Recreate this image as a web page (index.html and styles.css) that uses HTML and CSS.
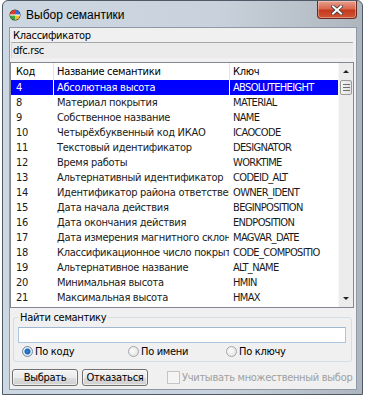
FILE: index.html
```html
<!DOCTYPE html>
<html lang="ru">
<head>
<meta charset="utf-8">
<link rel="stylesheet" href="styles.css">
</head>
<body>
<div class="window">
  <div class="titlebar">
    <svg class="app-icon" width="12" height="12" viewBox="0 0 12 12">
      <circle cx="6" cy="6" r="5.5" fill="#333"/>
      <path d="M6 1 A5 5 0 0 0 1 6 H6 Z" fill="#e23b2a"/>
      <path d="M6 1 A5 5 0 0 1 11 6 H6 Z" fill="#2f6fd6"/>
      <path d="M1 6 A5 5 0 0 0 6 11 V6 Z" fill="#3aa83a"/>
      <path d="M11 6 A5 5 0 0 1 6 11 V6 Z" fill="#f2c12e"/>
      <rect x="1" y="5.3" width="10" height="1.4" fill="#fff" opacity="0.8"/>
    </svg>
    <span class="title">Выбор семантики</span>
    <div class="close">
      <svg width="12" height="10" viewBox="0 0 12 10">
        <path d="M2 1.5 L10 8.5 M10 1.5 L2 8.5" stroke="#3b3b3b" stroke-width="3.6" stroke-linecap="square"/>
        <path d="M2 1.5 L10 8.5 M10 1.5 L2 8.5" stroke="#fff" stroke-width="2" stroke-linecap="square"/>
      </svg>
    </div>
  </div>
  <div class="client">
    <div class="label">Классификатор</div>
    <div class="field">dfc.rsc</div>
    <div class="list">
      <div class="cols">
        <div class="row head"><div class="c1">Код</div><div class="c2">Название семантики</div><div class="c3">Ключ</div></div>
        <div class="row sel"><div class="c1">4</div><div class="c2">Абсолютная высота</div><div class="c3">ABSOLUTEHEIGHT</div></div>
        <div class="row"><div class="c1">8</div><div class="c2">Материал покрытия</div><div class="c3">MATERIAL</div></div>
        <div class="row"><div class="c1">9</div><div class="c2">Собственное название</div><div class="c3">NAME</div></div>
        <div class="row"><div class="c1">10</div><div class="c2">Четырёхбуквенный код ИКАО</div><div class="c3">ICAOCODE</div></div>
        <div class="row"><div class="c1">11</div><div class="c2">Текстовый идентификатор</div><div class="c3">DESIGNATOR</div></div>
        <div class="row"><div class="c1">12</div><div class="c2">Время работы</div><div class="c3">WORKTIME</div></div>
        <div class="row"><div class="c1">13</div><div class="c2">Альтернативный идентификатор</div><div class="c3">CODEID_ALT</div></div>
        <div class="row"><div class="c1">14</div><div class="c2">Идентификатор района ответственности</div><div class="c3">OWNER_IDENT</div></div>
        <div class="row"><div class="c1">15</div><div class="c2">Дата начала действия</div><div class="c3">BEGINPOSITION</div></div>
        <div class="row"><div class="c1">16</div><div class="c2">Дата окончания действия</div><div class="c3">ENDPOSITION</div></div>
        <div class="row"><div class="c1">17</div><div class="c2">Дата измерения магнитного склонения</div><div class="c3">MAGVAR_DATE</div></div>
        <div class="row"><div class="c1">18</div><div class="c2">Классификационное число покрытия</div><div class="c3">CODE_COMPOSITIO</div></div>
        <div class="row"><div class="c1">19</div><div class="c2">Альтернативное название</div><div class="c3">ALT_NAME</div></div>
        <div class="row"><div class="c1">20</div><div class="c2">Минимальная высота</div><div class="c3">HMIN</div></div>
        <div class="row"><div class="c1">21</div><div class="c2">Максимальная высота</div><div class="c3">HMAX</div></div>
      </div>
      <div class="scrollbar">
        <div class="sb-btn"><span class="arrow-up"></span></div>
        <div class="thumb"><i></i><i></i><i></i></div>
        <div class="sb-track"></div>
        <div class="sb-btn"><span class="arrow-down"></span></div>
      </div>
    </div>
    <fieldset class="group">
      <legend>Найти семантику</legend>
      <div class="input"></div>
      <div class="radios">
        <div class="radio-item"><span class="radio on"></span>По коду</div>
        <div class="radio-item"><span class="radio"></span>По имени</div>
        <div class="radio-item"><span class="radio"></span>По ключу</div>
      </div>
    </fieldset>
    <div class="buttons">
      <div class="btn">Выбрать</div>
      <div class="btn">Отказаться</div>
      <div class="check"><span class="box"></span>Учитывать множественный выбор</div>
    </div>
  </div>
</div>
</body>
</html>
```

FILE: styles.css
```css
* { box-sizing: border-box; }
body {
  margin: 0;
  background: #fff;
  font-family: "DejaVu Sans Condensed", "DejaVu Sans", sans-serif;
  font-size: 11px;
  color: #000;
}
.window {
  margin-left: 2px;
  width: 361px;
  height: 395px;
  border: 1px solid #4f5a68;
  border-radius: 6px 6px 0 0;
  background: linear-gradient(to right, #cdd7e2 0%, #c9d2dc 60%, #aeb5bd 100%);
  padding: 0 5px 4px 6px;
  display: flex;
  flex-direction: column;
}
.titlebar {
  height: 26px;
  display: flex;
  align-items: flex-start;
  flex: none;
}
.app-icon { margin-top: 8px; flex: none; }
.title {
  margin-left: 5px;
  margin-top: 7px;
  font-family: "Liberation Sans", Arial, sans-serif;
  font-size: 12px;
  line-height: 15px;
}
.close {
  margin-left: auto;
  width: 40px;
  height: 18px;
  border: 1px solid #6b2a1e;
  border-top: none;
  border-radius: 0 0 4px 4px;
  background: linear-gradient(to bottom, #e7a08f 0%, #d9684f 45%, #c4391d 55%, #cf5636 100%);
  display: flex;
  align-items: center;
  justify-content: center;
  box-shadow: inset 0 0 0 1px rgba(255,255,255,0.35);
}
.client {
  flex: 1;
  background: #f0f0f0;
  border: 1px solid #8d99a6;
  display: flex;
  flex-direction: column;
  letter-spacing: -0.3px;
}
.label {
  margin-top: 1px;
  padding-left: 3px;
  line-height: 13px;
}
.field {
  margin: 0 3px 0 1px;
  height: 16px;
  background: #ebebeb;
  border-top: 1px solid #a8a8a8;
  border-left: 1px solid #d8d8d8;
  padding-left: 1px;
  line-height: 15px;
}
.list {
  margin: 4px 2px 0 0;
  height: 246px;
  border: 1px solid #828790;
  background: #fff;
  display: flex;
  flex: none;
}
.cols { flex: 1; overflow: hidden; }
.row {
  display: grid;
  grid-template-columns: 42px 176px 109px;
  height: 15px;
  line-height: 15px;
  color: #1a1a1a;
}
.row > div {
  white-space: nowrap;
  overflow: hidden;
}
.row .c1 { padding-left: 5px; }
.row .c2, .row .c3 {
  border-left: 1px solid transparent;
  background-clip: padding-box;
  padding-left: 3px;
}
.row .c3 { letter-spacing: -0.65px; }
.row.head .c3 { letter-spacing: -0.3px; }
.row.head { height: 17px; line-height: 17px; color: #000; }
.row.head .c2, .row.head .c3 { border-left-color: #e3e3e3; }
.row.sel > div { background-color: #0000ff; color: #fff; }
.scrollbar {
  width: 15px;
  flex: none;
  background: #ececec;
  border-left: 1px solid #f8f8f8;
  display: flex;
  flex-direction: column;
}
.sb-btn {
  height: 17px;
  display: flex;
  align-items: center;
  justify-content: center;
}
.arrow-up {
  width: 0; height: 0;
  border-left: 3px solid transparent;
  border-right: 3px solid transparent;
  border-bottom: 3px solid #222;
}
.arrow-down {
  width: 0; height: 0;
  border-left: 3px solid transparent;
  border-right: 3px solid transparent;
  border-top: 3px solid #222;
}
.thumb {
  margin: 0 1px 0 1px;
  height: 15px;
  border: 1px solid #9b9b9b;
  border-radius: 2px;
  background: linear-gradient(to right, #f3f3f3, #e2e2e2);
  display: flex;
  flex-direction: column;
  justify-content: center;
  align-items: center;
  gap: 2px;
}
.thumb i {
  display: block;
  width: 7px;
  height: 1px;
  background: #6f6f6f;
}
.sb-track { flex: 1; }
.group {
  margin: 3px 4px 0 3px;
  padding: 0 4px 3px 4px;
  border: 1px solid #d5dde3;
  border-radius: 3px;
  min-width: 0;
}
.group legend {
  padding: 0 2px;
  line-height: 13px;
}
.input {
  margin-top: 3px;
  height: 16px;
  width: 328px;
  background: #fff;
  border: 1px solid #abc6de;
  border-top-color: #9fb7cf;
}
.radios {
  margin-top: 2px;
  padding-left: 4px;
  display: grid;
  grid-template-columns: 106px 98px auto;
  line-height: 13px;
}
.radio-item { display: flex; align-items: center; gap: 2px; }
.radio {
  width: 11px;
  height: 11px;
  border-radius: 50%;
  border: 1px solid #a7a7a7;
  background: radial-gradient(circle at 40% 40%, #fdfdfd, #dcdcdc);
  display: inline-block;
  flex: none;
}
.radio.on {
  border-color: #6d8aa5;
  background: radial-gradient(circle at 50% 50%, #2b8ae0 0, #1c62b0 2.5px, #e8eef4 3.5px, #d6dde4 100%);
}
.buttons {
  margin-top: 7px;
  padding-left: 2px;
  display: flex;
  align-items: center;
}
.btn {
  width: 66px;
  height: 17px;
  margin-right: 4px;
  border: 1px solid #707070;
  border-radius: 3px;
  background: linear-gradient(to bottom, #f3f3f3 0%, #ebebeb 50%, #dddddd 51%, #cfcfcf 100%);
  text-align: center;
  line-height: 15px;
  box-shadow: inset 0 0 0 1px rgba(255,255,255,0.6);
}
.check {
  margin-left: 15px;
  display: flex;
  align-items: center;
  gap: 2px;
  color: #a0a0a0;
  white-space: nowrap;
}
.check .box {
  width: 13px;
  height: 13px;
  border: 1px solid #c4c4c4;
  background: #f4f4f4;
  flex: none;
}
```
